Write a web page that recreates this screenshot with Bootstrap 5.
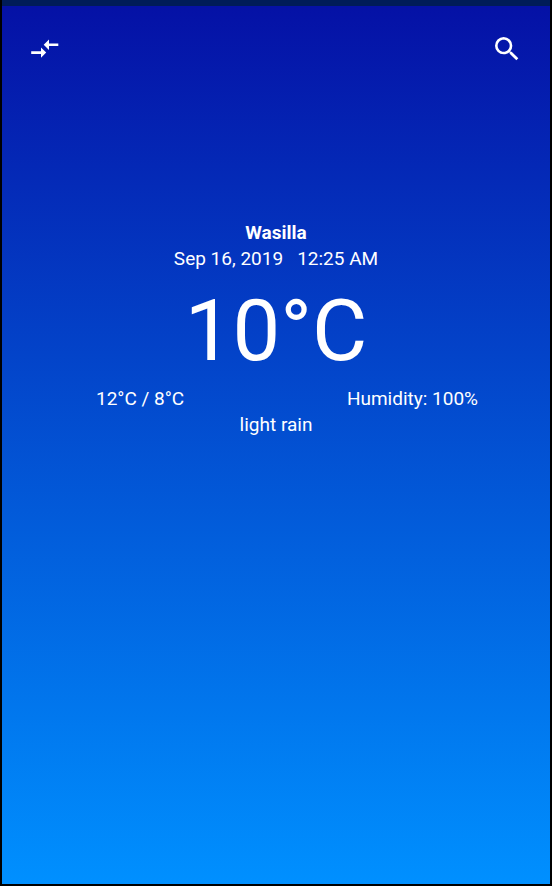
<!DOCTYPE html>
<html lang="en">
<head>
<meta charset="utf-8">
<meta name="viewport" content="width=device-width, initial-scale=1">
<title>Wasilla weather</title>
<link href="https://cdn.jsdelivr.net/npm/bootstrap@5.3.0/dist/css/bootstrap.min.css" rel="stylesheet">
<style>
body { font-family: Roboto, sans-serif; font-size: 19px; line-height: 26px; background: #000; }
.weather-screen { border: 2px solid #000; border-top: 0; background: linear-gradient(#0510a5, #0090ff); }
.status-strip { height: 6px; background: #001c58; }
.top-bar { padding: 27px 27px 0; }
.icon-btn { width: 32px; height: 32px; }
.current { padding-top: 155px; }
.city { font-size: 19px; line-height: 26px; }
.date-line { gap: 14px; }
.temp-now { font-size: 85px; line-height: 110px; }
.details { padding: 0 72px 0 94px; }
</style>
</head>
<body class="m-0">
<div class="weather-screen min-vh-100 text-white d-flex flex-column">
  <div class="status-strip"></div>
  <header class="top-bar d-flex justify-content-between">
    <button type="button" class="icon-btn btn p-0 border-0 text-white d-flex align-items-center justify-content-center" aria-label="Compare">
      <svg width="32" height="32" viewBox="0 0 32 32" fill="currentColor" aria-hidden="true"><path d="M14.7 11.7 20 6.5v3.9h9.3V13H20v3.9zM17.2 19.6 12 24.8v-3.9H2.2v-2.6H12v-3.9z"/></svg>
    </button>
    <button type="button" class="icon-btn btn p-0 border-0 text-white d-flex align-items-center justify-content-center" aria-label="Search">
      <svg width="32" height="32" viewBox="0 0 24 24" fill="currentColor" aria-hidden="true"><path d="M15.5 14h-.79l-.28-.27A6.47 6.47 0 0 0 16 9.5 6.5 6.5 0 1 0 9.5 16c1.61 0 3.09-.59 4.23-1.57l.27.28v.79l5 4.99L20.49 19l-4.99-5zm-6 0C7.01 14 5 11.99 5 9.5S7.01 5 9.5 5 14 7.01 14 9.5 11.99 14 9.5 14z"/></svg>
    </button>
  </header>
  <main class="current text-center">
    <h1 class="city fw-bold m-0">Wasilla</h1>
    <div class="date-line d-flex justify-content-center"><span>Sep 16, 2019</span><span>12:25 AM</span></div>
    <div class="temp-now pt-1">10°C</div>
    <div class="details d-flex justify-content-between"><span>12°C / 8°C</span><span>Humidity: 100%</span></div>
    <div>light rain</div>
  </main>
</div>
<script src="https://cdn.jsdelivr.net/npm/bootstrap@5.3.0/dist/js/bootstrap.bundle.min.js"></script>
</body>
</html>
